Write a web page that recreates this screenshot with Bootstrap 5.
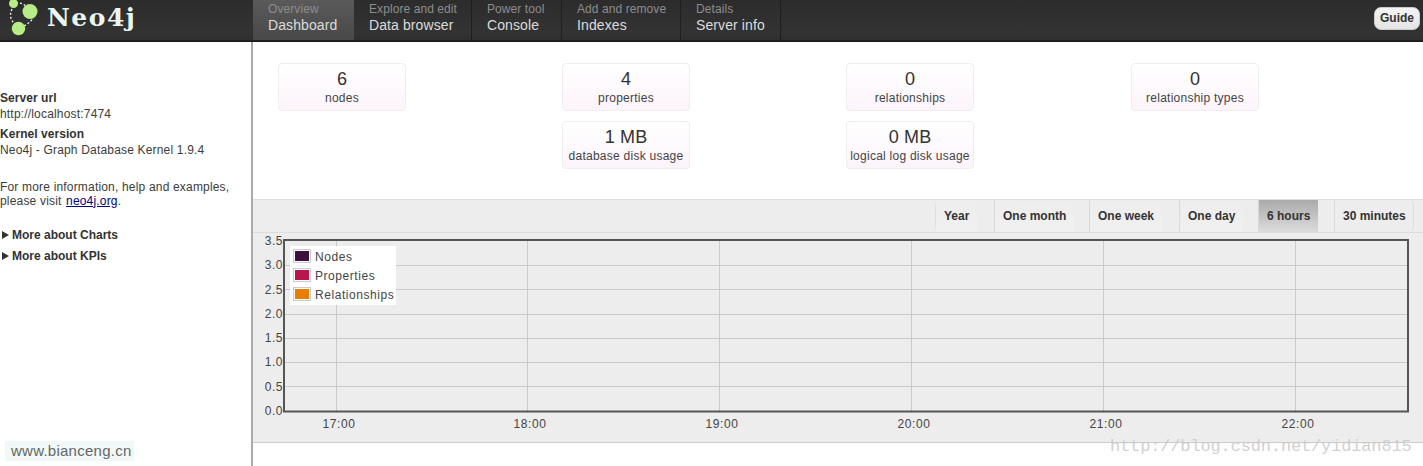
<!DOCTYPE html>
<html lang="en">
<head>
<meta charset="utf-8">
<title>Neo4j Dashboard</title>
<link rel="stylesheet" href="https://cdn.jsdelivr.net/npm/bootstrap@5.3.0/dist/css/bootstrap.min.css">
<style>
html,body{height:466px;overflow:hidden}
body{font-family:"Liberation Sans",Arial,sans-serif;font-size:12px;color:#3c3c3c;letter-spacing:.18px;background:#fff;position:relative}
.topbar{height:42px;background:linear-gradient(#2c2c2c,#333 80%,#2e2e2e 94%,#111);padding:0}
.brand-box{width:253px;height:42px}
.brand-name{font-family:"DejaVu Serif",serif;font-weight:700;font-size:25px;color:#eaf6f4;letter-spacing:1.5px;line-height:36px;margin-left:-1px}
.tab-link{display:block;height:40px;padding:2px 0 0 15px;border-right:1px solid #1f1f1f;text-decoration:none;line-height:16px;white-space:nowrap}
.tab-link.on{background:linear-gradient(#5a5a5a,#484848);border-right:0}
.tab-link:nth-child(1){width:101px}
.tab-link:nth-child(2){width:118px}
.tab-link:nth-child(3){width:90px}
.tab-link:nth-child(4){width:119px}
.tab-link:nth-child(5){width:100px}
.tab-sup{display:block;color:#8d8d8d;font-size:12px;letter-spacing:.08px;line-height:15px}
.tab-main{display:block;color:#dcdcdc;font-size:14px;letter-spacing:.1px;line-height:17px}
.guide-btn{font-size:12px;font-weight:700;color:#333;background:linear-gradient(#f4f4f4,#e4e4e4);border:1px solid #ccc;border-radius:7px;padding:3px 5px;line-height:15px;margin:7px 3px 0 0;letter-spacing:0}
.guide-btn:hover{background:#eee;color:#333}
.page-wrap{height:424px}
.side-col{width:251px;padding-top:48px;flex:none}
.main-col{border-left:2px solid #aaa;flex:1 1 auto;min-width:0}
.side-head{font-weight:700;line-height:16px;letter-spacing:.05px;color:#333}
.side-val{line-height:16px;margin-bottom:4px}
.side-para{line-height:13.5px;margin:23px 0 19px}
.side-para a{color:#000080;margin-left:1px}
.more-row{font-weight:700;line-height:16px;margin-bottom:5px;letter-spacing:0;color:#333}
.more-arrow{display:inline-block;width:0;height:0;margin:0 3px 0 2px;border-left:7px solid #333;border-top:4px solid transparent;border-bottom:4px solid transparent}
.tiles{height:157px;padding:21px 0 0 25px;display:grid;grid-template-columns:284px 284px 285px 128px;grid-auto-rows:48px;row-gap:10px;margin:0}
.tile{width:128px;height:48px;border:1px solid #eee;border-radius:4px;background:linear-gradient(#fff,#fdf4fb);text-align:center;padding-top:4px}
.tile-num{font-size:18px;line-height:22px;color:#333}
.tile-lab{line-height:16px;color:#444;letter-spacing:.25px}
.band{height:244px;background:#ededed;border-top:1px solid #ddd;border-bottom:1px solid #ccc}
.range-bar{height:33px;border-bottom:1px solid #ddd;padding-right:9px}
.range-set{height:32px;border-left:1px solid #ddd;border-right:1px solid #ddd;border-radius:6px}
.range-item{border-left:1px solid #d8d8d8;height:32px;white-space:nowrap}
.range-item:first-child{border-left:0;width:58px}
.range-item:nth-child(2){width:95px}
.range-item:nth-child(3){width:90px}
.range-item:nth-child(4){width:79px}
.range-item:nth-child(5){width:76px}
.range-item:nth-child(6){width:79px}
.range-link{display:inline-block;padding:0 8px;line-height:32px;font-weight:700;color:#333;text-decoration:none;letter-spacing:0;background:linear-gradient(#ededed,#f0f0f0)}
.range-item:nth-child(6) .range-link{padding-right:0;background:none}
.range-link.on{background:linear-gradient(#aaa,#dcdcdc)}
.plot{display:block}
.plot text{font-family:"Liberation Sans",Arial,sans-serif;font-size:12px;fill:#444;letter-spacing:.55px}
.site-mark{position:absolute;left:5px;top:441px;width:129px;height:20px;background:#f1f9f8;color:#666;font-size:15px;line-height:20px;padding-left:6px;letter-spacing:.25px}
.blog-mark{position:absolute;left:1110px;top:437px;font-family:"Liberation Mono",monospace;font-size:17px;line-height:20px;color:#cacaca;opacity:.85;letter-spacing:-.15px}
</style>
</head>
<body>
<nav class="topbar d-flex align-items-start">
  <div class="brand-box d-flex align-items-start flex-shrink-0">
    <svg width="48" height="36" viewBox="0 0 48 36" role="img" aria-label="Neo4j logo">
      <path d="M16 3 Q24 2 29 10 M12 9 Q8 18 15 24 M24 26 Q31 22 33 18" fill="none" stroke="#eef5ea" stroke-width="1.4" stroke-dasharray="2 2"/>
      <circle cx="13.500" cy="3.500" r="4.500" fill="#b7ec86"/>
      <circle cx="30" cy="11.500" r="7.500" fill="#b7ec86"/>
      <circle cx="18.500" cy="28.500" r="6.700" fill="#b7ec86"/>
    </svg>
    <span class="brand-name">Neo4j</span>
  </div>
  <div class="d-flex">
    <a class="tab-link on" href="#"><span class="tab-sup">Overview</span><span class="tab-main">Dashboard</span></a>
    <a class="tab-link" href="#"><span class="tab-sup">Explore and edit</span><span class="tab-main">Data browser</span></a>
    <a class="tab-link" href="#"><span class="tab-sup">Power tool</span><span class="tab-main">Console</span></a>
    <a class="tab-link" href="#"><span class="tab-sup">Add and remove</span><span class="tab-main">Indexes</span></a>
    <a class="tab-link" href="#"><span class="tab-sup">Details</span><span class="tab-main">Server info</span></a>
  </div>
  <button type="button" class="btn guide-btn ms-auto">Guide</button>
</nav>
<div class="page-wrap d-flex">
  <aside class="side-col">
    <div class="side-head">Server url</div>
    <div class="side-val">http://localhost:7474</div>
    <div class="side-head">Kernel version</div>
    <div class="side-val">Neo4j - Graph Database Kernel 1.9.4</div>
    <p class="side-para">For more information, help and examples,<br>please visit <a href="#">neo4j.org</a>.</p>
    <div class="more-row"><span class="more-arrow"></span>More about Charts</div>
    <div class="more-row"><span class="more-arrow"></span>More about KPIs</div>
  </aside>
  <main class="main-col">
    <div class="tiles">
      <div class="tile"><div class="tile-num">6</div><div class="tile-lab">nodes</div></div>
      <div class="tile"><div class="tile-num">4</div><div class="tile-lab">properties</div></div>
      <div class="tile"><div class="tile-num">0</div><div class="tile-lab">relationships</div></div>
      <div class="tile"><div class="tile-num">0</div><div class="tile-lab">relationship types</div></div>
      <div></div>
      <div class="tile"><div class="tile-num">1 MB</div><div class="tile-lab">database disk usage</div></div>
      <div class="tile"><div class="tile-num">0 MB</div><div class="tile-lab">logical log disk usage</div></div>
    </div>
    <section class="band">
      <div class="range-bar d-flex justify-content-end">
        <div class="range-set d-flex">
          <div class="range-item"><a class="range-link" href="#">Year</a></div>
          <div class="range-item"><a class="range-link" href="#">One month</a></div>
          <div class="range-item"><a class="range-link" href="#">One week</a></div>
          <div class="range-item"><a class="range-link" href="#">One day</a></div>
          <div class="range-item"><a class="range-link on" href="#">6 hours</a></div>
          <div class="range-item"><a class="range-link" href="#">30 minutes</a></div>
        </div>
      </div>
      <svg class="plot" width="1170" height="209" viewBox="253 233 1170 209">
        <g stroke="#c9c9c9" stroke-width="1">
          <path d="M284 265.500H1408M284 289.500H1408M284 314.500H1408M284 338.500H1408M284 362.500H1408M284 386.500H1408" fill="none"/>
          <path d="M336.500 240V411M527.500 240V411M719.500 240V411M911.500 240V411M1103.500 240V411M1295.500 240V411" fill="none"/>
        </g>
        <rect x="284" y="240" width="1124" height="171.500" fill="none" stroke="#555" stroke-width="2"/>
        <g text-anchor="end">
          <text x="283" y="245">3.5</text><text x="283" y="269">3.0</text><text x="283" y="294">2.5</text><text x="283" y="318">2.0</text>
          <text x="283" y="342">1.5</text><text x="283" y="366">1.0</text><text x="283" y="391">0.5</text><text x="283" y="415">0.0</text>
        </g>
        <g text-anchor="middle">
          <text x="339" y="428">17:00</text><text x="530" y="428">18:00</text><text x="722" y="428">19:00</text>
          <text x="914" y="428">20:00</text><text x="1106" y="428">21:00</text><text x="1298" y="428">22:00</text>
        </g>
        <rect x="290" y="246" width="106" height="59" fill="#fff"/>
        <rect x="293.500" y="249.500" width="17" height="13" fill="#fff" stroke="#ccc"/><rect x="295" y="251" width="14" height="10" fill="#3f0f3f"/>
        <rect x="293.500" y="268.500" width="17" height="13" fill="#fff" stroke="#ccc"/><rect x="295" y="270" width="14" height="10" fill="#b9164f"/>
        <rect x="293.500" y="287.500" width="17" height="13" fill="#fff" stroke="#ccc"/><rect x="295" y="289" width="14" height="10" fill="#e87d00"/>
        <text x="315" y="261">Nodes</text><text x="315" y="280">Properties</text><text x="315" y="299">Relationships</text>
      </svg>
    </section>
  </main>
</div>
<div class="site-mark">www.bianceng.cn</div>
<div class="blog-mark">http://blog.csdn.net/yidian815</div>
</body>
</html>
